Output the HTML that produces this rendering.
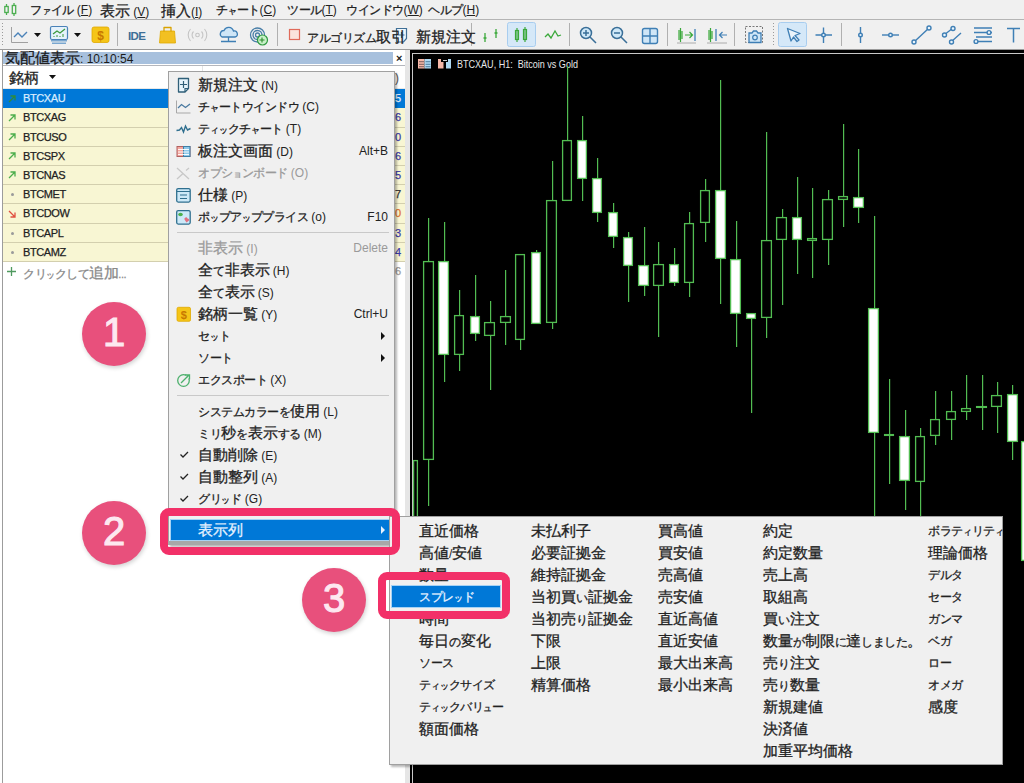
<!DOCTYPE html>
<html><head><meta charset="utf-8">
<style>
*{margin:0;padding:0;box-sizing:border-box}
html,body{width:1024px;height:783px;overflow:hidden}
body{position:relative;background:#f0f0f0;font-family:"Liberation Sans",sans-serif;font-size:12px;color:#222}
.a{position:absolute}
.t{position:absolute;white-space:nowrap;line-height:1}
#menubar{left:0;top:0;width:1024px;height:20px;background:#f0f0f0;border-bottom:1px solid #b4b4b4}
#toolbar{left:0;top:20px;width:1024px;height:30px;background:#f0f0f0;border-bottom:1px solid #9a9a9a}
#panel{left:0;top:50px;width:410px;height:733px;background:#fff}
#chart{left:410px;top:50px;width:614px;height:733px;background:#000}
.row{position:absolute;left:3px;width:402px;height:19px;background:#f7f5d6;border-bottom:1px solid #e3e0bd}
.row .n{position:absolute;left:20px;top:4px;font-size:12px;color:#222}
.row .v{position:absolute;left:393px;top:4px;font-size:12px;color:#3a3aa0}
.cm{position:absolute;background:#f0f0f0;border:1px solid #a0a0a0}
.mi{position:absolute;left:30px;font-size:12px;color:#222;white-space:nowrap}
.sc{position:absolute;right:6px;font-size:12px;color:#222;white-space:nowrap}
.dis{color:#9a9a9a}
.sep{position:absolute;left:8px;right:4px;height:1px;background:#c8c8c8}
.sm{position:absolute;font-size:12px;color:#222;white-space:nowrap}
.circle{position:absolute;width:64px;height:64px;border-radius:50%;background:#e8507c;color:#fff;font-size:40px;font-weight:normal;color:#fde8f0;-webkit-text-stroke:1.1px #fde8f0;text-align:center;line-height:60px;box-shadow:1px 2px 4px rgba(0,0,0,.18)}
.pbox{position:absolute;border:8px solid #f23068;border-radius:9px}
i.k{font-style:normal;font-size:14.7px;-webkit-text-stroke:0.3px currentColor}
i.h{font-style:normal;font-size:12px;letter-spacing:-0.5px;-webkit-text-stroke:0.3px currentColor}
i.s{font-style:normal;font-size:9.3px;-webkit-text-stroke:0.3px currentColor}
.lt{font-size:11px;letter-spacing:-0.4px;-webkit-text-stroke:0.25px currentColor}
.hl{position:absolute;background:#0078d7;border:1px solid #a9d4f5;color:#e8f4ff}
</style></head><body>

<div id="menubar" class="a">
  <svg class="a" style="left:4px;top:3px" width="14" height="13" viewBox="0 0 14 13"><g stroke="#4caf50" stroke-width="1.3" fill="#f0f0f0"><line x1="2.5" y1="1" x2="2.5" y2="12"/><rect x="0.8" y="3.5" width="3.4" height="6"/><line x1="10" y1="0" x2="10" y2="13"/><rect x="8.3" y="2.5" width="3.4" height="8"/></g></svg>
  <span class="t" style="left:30px;top:4px"><i class="h">フ</i><i class="s">ァ</i><i class="h">イル</i> (<u>F</u>)</span>
  <span class="t" style="left:100px;top:4px"><i class="k">表示</i> (<u>V</u>)</span>
  <span class="t" style="left:161px;top:4px"><i class="k">挿入</i>(<u>I</u>)</span>
  <span class="t" style="left:216px;top:4px"><i class="h">チ</i><i class="s">ャ</i><i class="h">ート</i>(<u>C</u>)</span>
  <span class="t" style="left:287px;top:4px"><i class="h">ツール</i>(<u>T</u>)</span>
  <span class="t" style="left:346px;top:4px"><i class="h">ウインドウ</i>(<u>W</u>)</span>
  <span class="t" style="left:428px;top:4px"><i class="h">ヘルプ</i>(<u>H</u>)</span>
</div>

<div id="toolbar" class="a">
 <svg class="a" style="left:0;top:0" width="1024" height="30" viewBox="0 20 1024 30">
  <g fill="#9a9a9a"><rect x="2" y="23" width="1" height="1"/><rect x="2" y="26" width="1" height="1"/><rect x="2" y="29" width="1" height="1"/><rect x="2" y="32" width="1" height="1"/><rect x="2" y="35" width="1" height="1"/><rect x="2" y="38" width="1" height="1"/><rect x="2" y="41" width="1" height="1"/><rect x="2" y="44" width="1" height="1"/>
  <rect x="773" y="23" width="1" height="1"/><rect x="773" y="26" width="1" height="1"/><rect x="773" y="29" width="1" height="1"/><rect x="773" y="32" width="1" height="1"/><rect x="773" y="35" width="1" height="1"/><rect x="773" y="38" width="1" height="1"/><rect x="773" y="41" width="1" height="1"/><rect x="773" y="44" width="1" height="1"/></g>
  <!-- line chart -->
  <path d="M11.5 27V42.5H28" stroke="#a0a0a0" stroke-width="1" fill="none"/>
  <path d="M14 37L18 33L22 37L27 32" stroke="#4a82b8" stroke-width="1.4" fill="none"/>
  <path d="M34 33H41L37.5 37Z" fill="#111"/>
  <!-- monitor chart -->
  <rect x="50.5" y="26.5" width="17" height="13" rx="1.5" fill="#e6f2fb" stroke="#4a82b8" stroke-width="1.2"/>
  <path d="M53 34L57 31L60 33L65 29" stroke="#3a9a3a" stroke-width="1.2" fill="none"/>
  <path d="M54 37V36M57 37V35M60 37V36M63 37V34" stroke="#3a9a3a" stroke-width="1"/>
  <rect x="51" y="40" width="16" height="1.5" fill="#7aa7d0"/><rect x="52" y="42.5" width="14" height="1.5" fill="#7aa7d0"/>
  <path d="M74 33H81L77.5 37Z" fill="#111"/>
  <!-- dollar -->
  <rect x="92" y="27" width="17" height="15.5" rx="2" fill="#f5c518" stroke="#e0a800" stroke-width="0.8"/>
  <text x="100.5" y="39.5" font-family="Liberation Sans" font-size="12" font-weight="bold" fill="#c87800" text-anchor="middle">$</text>
  <rect x="117" y="23" width="1" height="23" fill="#b0b0b0"/>
  <text x="128" y="39.5" font-family="Liberation Sans" font-size="11.5" font-weight="bold" fill="#3d6e96" letter-spacing="-0.6">IDE</text>
  <!-- bag -->
  <path d="M160.5 31H174.5L175.5 43H159.5Z" fill="#f2c022" stroke="#e0aa00" stroke-width="0.8"/><path d="M164 31.5V27.5H171V31.5" stroke="#d9a200" stroke-width="1.3" fill="none" stroke-linejoin="round"/>
  <!-- wifi gray -->
  <g stroke="#c4c4c4" stroke-width="1.1" fill="none"><circle cx="197.5" cy="35" r="1.8"/><path d="M193.5 31.5A5 5 0 0 0 193.5 38.5M201.5 31.5A5 5 0 0 1 201.5 38.5M190.5 29A9 9 0 0 0 190.5 41M204.5 29A9 9 0 0 1 204.5 41"/></g>
  <!-- cloud -->
  <path d="M222 37A3.5 3.5 0 0 1 224 30.5A5 5 0 0 1 233.5 31A3 3 0 0 1 235 37Z" fill="#cfe6f7" stroke="#3f7fb5" stroke-width="1.3"/>
  <path d="M228.5 37V41M221 41.5H236" stroke="#3f7fb5" stroke-width="1.3"/>
  <!-- signal -->
  <g stroke="#4a7fa8" stroke-width="1.3" fill="none"><circle cx="257.5" cy="35" r="2"/><circle cx="257.5" cy="35" r="4.5"/><circle cx="257.5" cy="35" r="7"/></g>
  <circle cx="262.5" cy="40" r="5" fill="#c8f0c8" stroke="#2f9a3f" stroke-width="1.2"/><path d="M262 37.5V42.5M259.5 40H264.5" stroke="#2a8a2a" stroke-width="1.1"/>
  <rect x="277" y="23" width="1" height="23" fill="#b0b0b0"/>
  <rect x="289.5" y="29.5" width="10" height="10" fill="#fbe3dc" stroke="#e06a5a" stroke-width="1.2"/>
  <!-- new order -->
  <path d="M396.5 28.5H406.5V38.5L403.5 42H396.5Z" fill="#eef6fc" stroke="#3f6f96" stroke-width="1.2"/><path d="M401.5 32V38M398.5 35H404.5" stroke="#3f6f96" stroke-width="1.2"/>
  <rect x="471" y="23" width="1" height="23" fill="#b0b0b0"/>
  <g stroke="#3aa83a" stroke-width="1.3" fill="none"><path d="M485 33V42M483.5 38H486.5M496 29V38M494.5 33H497.5"/></g>
  <!-- highlighted candles -->
  <rect x="507.5" y="22.5" width="28" height="24" rx="2" fill="#d5e8f8" stroke="#a8cdef"/>
  <g stroke="#3aa83a" stroke-width="1.2" fill="none"><rect x="515.5" y="30.5" width="3" height="9"/><path d="M517 28V42"/><rect x="523.5" y="29.5" width="3" height="10"/><path d="M525 27V42"/></g>
  <path d="M545 37L548 34L551 38L555 31L558 36L561 35" stroke="#3aa83a" stroke-width="1.3" fill="none"/>
  <rect x="569" y="23" width="1" height="23" fill="#b0b0b0"/>
  <g stroke="#3a6f98" stroke-width="1.5" fill="#cfe8f8"><circle cx="586" cy="33" r="5.5"/><path d="M590 37L596 43M583 33H589M586 30V36"/>
  <circle cx="617" cy="33" r="5.5"/><path d="M621 37L627 43M614 33H620"/></g>
  <rect x="642.5" y="28.5" width="15" height="15" rx="2" fill="#cfe6f7" stroke="#3f7fb5" stroke-width="1.4"/><path d="M650 29V43M643 36H657" stroke="#3f7fb5" stroke-width="1.4"/>
  <rect x="667" y="23" width="1" height="23" fill="#b0b0b0"/>
  <g stroke="#3aa83a" stroke-width="1.2" fill="none"><path d="M679 30V40M682 31V39M680.5 28V42"/></g><path d="M685 35H692M689.5 32L692.5 35L689.5 38" stroke="#3aa83a" stroke-width="1.2" fill="none"/><path d="M695 29V41" stroke="#3f7fb5" stroke-width="1.3"/><path d="M677 43H696" stroke="#9a9a9a" stroke-width="0.8"/>
  <g stroke="#3aa83a" stroke-width="1.2" fill="none"><path d="M709 30V40M712 31V39M710.5 28V42"/></g><path d="M716 29V41" stroke="#3f7fb5" stroke-width="1.3"/><path d="M720 35H727M722.5 32L719.5 35L722.5 38" stroke="#3f7fb5" stroke-width="1.2" fill="none"/><path d="M707 43H727" stroke="#9a9a9a" stroke-width="0.8"/>
  <rect x="734" y="23" width="1" height="23" fill="#b0b0b0"/>
  <rect x="745.5" y="26.5" width="17" height="16" fill="none" stroke="#777" stroke-width="1" stroke-dasharray="2 1.5"/>
  <path d="M749 33H752L753.5 31H756.5L758 33H761V42.5H749Z" fill="#cfe6f7" stroke="#3f7fb5" stroke-width="1.3"/><circle cx="755" cy="37.5" r="2.3" fill="none" stroke="#3f7fb5" stroke-width="1.2"/>
  <!-- cursor highlighted -->
  <rect x="778.5" y="22.5" width="28" height="24" rx="2" fill="#d5e8f8" stroke="#a8cdef"/>
  <path d="M787.5 28.5L800 33.5L795 35.5L799 40L797 41.5L793.5 37L791 41Z" fill="#eaf4fb" stroke="#3f7fb5" stroke-width="1.3" stroke-linejoin="round"/>
  <g stroke="#3f7fb5" stroke-width="1.4" fill="none"><path d="M815.5 35H832M823.5 27.5V43"/><circle cx="823.5" cy="35" r="1.8" fill="#eaf4fb"/></g>
  <rect x="841" y="23" width="1" height="23" fill="#b0b0b0"/>
  <g stroke="#3f7fb5" stroke-width="1.4" fill="#eaf4fb"><path d="M860.5 27V43"/><circle cx="860.5" cy="35" r="1.8"/>
  <path d="M882 35H899"/><circle cx="890.5" cy="35" r="1.8"/>
  <path d="M914 42L929 28"/><circle cx="914" cy="42" r="2"/><circle cx="929" cy="28" r="2"/>
  <path d="M944 35L953 28M951 42L961 33"/><circle cx="944.5" cy="35" r="2"/><circle cx="953" cy="28.5" r="2"/><circle cx="951.5" cy="42" r="2"/>
  <path d="M974 28H992M974 32.5H992M976 37H992M976 41.5H992" fill="none"/><circle cx="989" cy="32.5" r="1.9"/><circle cx="976" cy="41.5" r="1.9"/>
  <path d="M1007 28.5H1020M1013.5 28.5V42.5" fill="none" stroke-width="1.5"/></g>
 </svg>
 <span class="t" style="left:307px;top:10px"><i class="h">アルゴリズム</i><i class="k">取引</i></span>
 <span class="t" style="left:416px;top:10px"><i class="k">新規注文</i></span>
</div>

<div id="panel" class="a">
  <div class="a" style="left:2px;top:0;width:1px;height:733px;background:#9c9c9c"></div><div class="a" style="left:405px;top:0;width:5px;height:733px;background:#e6e6e6"></div>
  <div class="a" style="left:3px;top:2px;width:390px;height:12px;background:#a7c0dd"></div><div class="a" style="left:3px;top:15px;width:402px;height:1px;background:#b4b6bc"></div>
  <span class="t" style="left:5px;top:1px;font-size:12px;color:#1a1a1a"><i class="k">気配値表示</i>: 10:10:54</span>
  <span class="t" style="left:396px;top:3px;font-size:11px;font-weight:bold;color:#222">×</span>
  <div class="a" style="left:3px;top:16px;width:402px;height:23px;background:#fff;border-bottom:1px solid #e8e8e8"></div>
  <span class="t" style="left:9px;top:21px"><i class="k">銘柄</i></span>
  <svg class="a" style="left:49px;top:25px" width="7" height="4"><path d="M0 0H7L3.5 4Z" fill="#111"/></svg>
  <div class="a" style="left:202px;top:16px;width:1px;height:23px;background:#e4e4e4"></div>
  <span class="t" style="left:395px;top:22px;color:#555">)</span>
  <div class="a" style="left:3px;top:39px;width:402px;height:19px;background:#0078d7"></div>
  <svg class="a" style="left:8px;top:44.5px" width="8" height="8"><path d="M1 7L7 1M2.5 1H7V5.5" stroke="#2f8a3a" stroke-width="1.3" fill="none"/></svg>
  <span class="t lt" style="left:23px;top:43.0px;color:#d8ecff">BTCXAU</span>
  <span class="t lt" style="left:395px;top:43.0px;color:#e8f4ff">5</span>
  <div class="a" style="left:3px;top:58px;width:402px;height:20px;background:#f8f6d3;border-bottom:1px solid #d3cfae"></div>
  <svg class="a" style="left:8px;top:63.5px" width="8" height="8"><path d="M1 7L7 1M2.5 1H7V5.5" stroke="#4cae4c" stroke-width="1.3" fill="none"/></svg>
  <span class="t lt" style="left:23px;top:62.0px;color:#222">BTCXAG</span>
  <span class="t lt" style="left:395px;top:62.0px;color:#3a3aa8">6</span>
  <div class="a" style="left:3px;top:78px;width:402px;height:19px;background:#f8f6d3;border-bottom:1px solid #d3cfae"></div>
  <svg class="a" style="left:8px;top:83.0px" width="8" height="8"><path d="M1 7L7 1M2.5 1H7V5.5" stroke="#4cae4c" stroke-width="1.3" fill="none"/></svg>
  <span class="t lt" style="left:23px;top:81.5px;color:#222">BTCUSO</span>
  <span class="t lt" style="left:395px;top:81.5px;color:#3a3aa8">0</span>
  <div class="a" style="left:3px;top:97px;width:402px;height:19px;background:#f8f6d3;border-bottom:1px solid #d3cfae"></div>
  <svg class="a" style="left:8px;top:102.0px" width="8" height="8"><path d="M1 7L7 1M2.5 1H7V5.5" stroke="#4cae4c" stroke-width="1.3" fill="none"/></svg>
  <span class="t lt" style="left:23px;top:100.5px;color:#222">BTCSPX</span>
  <span class="t lt" style="left:395px;top:100.5px;color:#3a3aa8">6</span>
  <div class="a" style="left:3px;top:116px;width:402px;height:19px;background:#f8f6d3;border-bottom:1px solid #d3cfae"></div>
  <svg class="a" style="left:8px;top:121.0px" width="8" height="8"><path d="M1 7L7 1M2.5 1H7V5.5" stroke="#4cae4c" stroke-width="1.3" fill="none"/></svg>
  <span class="t lt" style="left:23px;top:119.5px;color:#222">BTCNAS</span>
  <span class="t lt" style="left:395px;top:119.5px;color:#3a3aa8">5</span>
  <div class="a" style="left:3px;top:135px;width:402px;height:19px;background:#f8f6d3;border-bottom:1px solid #d3cfae"></div>
  <div class="a" style="left:11px;top:143.0px;width:3px;height:3px;border-radius:50%;background:#9a9a9a"></div>
  <span class="t lt" style="left:23px;top:138.5px;color:#222">BTCMET</span>
  <span class="t lt" style="left:395px;top:138.5px;color:#333">7</span>
  <div class="a" style="left:3px;top:154px;width:402px;height:20px;background:#f8f6d3;border-bottom:1px solid #d3cfae"></div>
  <svg class="a" style="left:8px;top:159.5px" width="8" height="8"><path d="M1 1L7 7M2.5 7H7V2.5" stroke="#e05040" stroke-width="1.3" fill="none"/></svg>
  <span class="t lt" style="left:23px;top:158.0px;color:#222">BTCDOW</span>
  <span class="t lt" style="left:395px;top:158.0px;color:#e07030">0</span>
  <div class="a" style="left:3px;top:174px;width:402px;height:19px;background:#f8f6d3;border-bottom:1px solid #d3cfae"></div>
  <div class="a" style="left:11px;top:182.0px;width:3px;height:3px;border-radius:50%;background:#9a9a9a"></div>
  <span class="t lt" style="left:23px;top:177.5px;color:#222">BTCAPL</span>
  <span class="t lt" style="left:395px;top:177.5px;color:#3a3aa8">3</span>
  <div class="a" style="left:3px;top:193px;width:402px;height:19px;background:#f8f6d3;border-bottom:1px solid #d3cfae"></div>
  <div class="a" style="left:11px;top:201.0px;width:3px;height:3px;border-radius:50%;background:#9a9a9a"></div>
  <span class="t lt" style="left:23px;top:196.5px;color:#222">BTCAMZ</span>
  <span class="t lt" style="left:395px;top:196.5px;color:#3a3aa8">4</span>
  <svg class="a" style="left:7px;top:216.5px" width="9" height="9"><path d="M4.5 0V9M0 4.5H9" stroke="#4f9a5f" stroke-width="1.3"/></svg>
  <span class="t lt" style="left:23px;top:215.5px;color:#8a8a8a"><i class="h">クリ</i><i class="s">ッ</i><i class="h">クして</i><i class="k">追加</i>...</span>
  <span class="t lt" style="left:395px;top:215.5px;color:#9a9a9a">6</span>
</div>

<div id="chart" class="a">
  <div class="a" style="left:2px;top:3px;width:1px;height:730px;background:#c8c8c8"></div>
  <div class="a" style="left:2px;top:3px;width:612px;height:1px;background:#c8c8c8"></div>
  <svg class="a" style="left:8px;top:9px" width="14" height="10"><rect x="0" y="0" width="6.5" height="9.5" fill="#f6b8a8"/><rect x="6.5" y="0" width="6.5" height="9.5" fill="#b0daf4"/><g fill="#6a5050"><rect x="1" y="2.3" width="5" height="0.9"/><rect x="1" y="4.8" width="5" height="0.9"/><rect x="1" y="7.3" width="5" height="0.9"/></g><g fill="#3f6f90"><rect x="7.5" y="2.3" width="5" height="0.9"/><rect x="7.5" y="4.8" width="5" height="0.9"/><rect x="7.5" y="7.3" width="5" height="0.9"/></g></svg>
  <svg class="a" style="left:28px;top:9px" width="14" height="10"><path d="M0 0H3V3H5.5V9.5H0Z" fill="#f6b8a8"/><path d="M8 3H10V0H13V9.5H8Z" fill="#b0daf4"/><rect x="5" y="1" width="4" height="1" fill="#d0d0d0"/></svg>
  <span class="t" style="left:47px;top:9px;font-size:10.5px;transform:scaleX(0.86);transform-origin:0 0;color:#e8e8e8">BTCXAU, H1:&nbsp; Bitcoin vs Gold</span>
</div>
<svg class="a" style="left:0;top:0" width="1024" height="783">
<rect x="413.6" y="460.6" width="3.8" height="68.8" fill="#000" stroke="#52bd52" stroke-width="1.3"/>
<rect x="428" y="218" width="1.2" height="43" fill="#52bd52"/>
<rect x="428" y="460" width="1.2" height="46" fill="#52bd52"/>
<rect x="423.6" y="261.6" width="9.8" height="197.8" fill="#000" stroke="#52bd52" stroke-width="1.3"/>
<rect x="444" y="222" width="1.2" height="39" fill="#52bd52"/>
<rect x="444" y="355" width="1.2" height="27" fill="#52bd52"/>
<rect x="438.6" y="261.6" width="9.8" height="92.8" fill="#fff" stroke="#52bd52" stroke-width="1.3"/>
<rect x="459" y="290" width="1.2" height="25" fill="#52bd52"/>
<rect x="459" y="355" width="1.2" height="16" fill="#52bd52"/>
<rect x="454.6" y="315.6" width="8.8" height="38.8" fill="#000" stroke="#52bd52" stroke-width="1.3"/>
<rect x="475" y="275" width="1.2" height="41" fill="#52bd52"/>
<rect x="475" y="334" width="1.2" height="7" fill="#52bd52"/>
<rect x="470.6" y="316.6" width="8.8" height="16.8" fill="#fff" stroke="#52bd52" stroke-width="1.3"/>
<rect x="490" y="301" width="1.2" height="21" fill="#52bd52"/>
<rect x="490" y="336" width="1.2" height="54" fill="#52bd52"/>
<rect x="484.6" y="322.6" width="9.8" height="12.8" fill="#000" stroke="#52bd52" stroke-width="1.3"/>
<rect x="505" y="270" width="1.2" height="46" fill="#52bd52"/>
<rect x="505" y="323" width="1.2" height="22" fill="#52bd52"/>
<rect x="500.6" y="316.6" width="9.8" height="5.8" fill="#000" stroke="#52bd52" stroke-width="1.3"/>
<rect x="520" y="340" width="1.2" height="10" fill="#52bd52"/>
<rect x="515.6" y="254.6" width="8.8" height="84.8" fill="#000" stroke="#52bd52" stroke-width="1.3"/>
<rect x="536" y="250" width="1.2" height="2" fill="#52bd52"/>
<rect x="531.6" y="252.6" width="8.8" height="70.8" fill="#fff" stroke="#52bd52" stroke-width="1.3"/>
<rect x="552" y="161" width="1.2" height="39" fill="#52bd52"/>
<rect x="552" y="323" width="1.2" height="6" fill="#52bd52"/>
<rect x="546.6" y="200.6" width="9.8" height="121.8" fill="#000" stroke="#52bd52" stroke-width="1.3"/>
<rect x="567" y="66" width="1.2" height="74" fill="#52bd52"/>
<rect x="562.6" y="140.6" width="8.8" height="59.8" fill="#000" stroke="#52bd52" stroke-width="1.3"/>
<rect x="582" y="116" width="1.2" height="24" fill="#52bd52"/>
<rect x="582" y="179" width="1.2" height="22" fill="#52bd52"/>
<rect x="577.6" y="140.6" width="8.8" height="37.8" fill="#fff" stroke="#52bd52" stroke-width="1.3"/>
<rect x="597" y="158" width="1.2" height="20" fill="#52bd52"/>
<rect x="597" y="213" width="1.2" height="9" fill="#52bd52"/>
<rect x="592.6" y="178.6" width="8.8" height="33.8" fill="#fff" stroke="#52bd52" stroke-width="1.3"/>
<rect x="613" y="203" width="1.2" height="9" fill="#52bd52"/>
<rect x="613" y="237" width="1.2" height="11" fill="#52bd52"/>
<rect x="608.6" y="212.6" width="8.8" height="23.8" fill="#fff" stroke="#52bd52" stroke-width="1.3"/>
<rect x="628" y="232" width="1.2" height="5" fill="#52bd52"/>
<rect x="628" y="266" width="1.2" height="36" fill="#52bd52"/>
<rect x="623.6" y="237.6" width="8.8" height="27.8" fill="#fff" stroke="#52bd52" stroke-width="1.3"/>
<rect x="644" y="227" width="1.2" height="38" fill="#52bd52"/>
<rect x="644" y="286" width="1.2" height="10" fill="#52bd52"/>
<rect x="638.6" y="265.6" width="9.8" height="19.8" fill="#fff" stroke="#52bd52" stroke-width="1.3"/>
<rect x="658" y="242" width="1.2" height="22" fill="#52bd52"/>
<rect x="658" y="286" width="1.2" height="51" fill="#52bd52"/>
<rect x="653.6" y="264.6" width="9.8" height="20.8" fill="#000" stroke="#52bd52" stroke-width="1.3"/>
<rect x="674" y="248" width="1.2" height="16" fill="#52bd52"/>
<rect x="674" y="283" width="1.2" height="3" fill="#52bd52"/>
<rect x="669.6" y="264.6" width="8.8" height="17.8" fill="#fff" stroke="#52bd52" stroke-width="1.3"/>
<rect x="689" y="212" width="1.2" height="11" fill="#52bd52"/>
<rect x="689" y="283" width="1.2" height="14" fill="#52bd52"/>
<rect x="684.6" y="223.6" width="8.8" height="58.8" fill="#000" stroke="#52bd52" stroke-width="1.3"/>
<rect x="705" y="179" width="1.2" height="11" fill="#52bd52"/>
<rect x="705" y="223" width="1.2" height="19" fill="#52bd52"/>
<rect x="700.6" y="190.6" width="8.8" height="31.8" fill="#000" stroke="#52bd52" stroke-width="1.3"/>
<rect x="720" y="80" width="1.2" height="110" fill="#52bd52"/>
<rect x="720" y="259" width="1.2" height="45" fill="#52bd52"/>
<rect x="715.6" y="190.6" width="9.8" height="67.8" fill="#fff" stroke="#52bd52" stroke-width="1.3"/>
<rect x="736" y="221" width="1.2" height="38" fill="#52bd52"/>
<rect x="736" y="314" width="1.2" height="33" fill="#52bd52"/>
<rect x="730.6" y="259.6" width="9.8" height="53.8" fill="#fff" stroke="#52bd52" stroke-width="1.3"/>
<rect x="751" y="319" width="1.2" height="94" fill="#52bd52"/>
<rect x="746.6" y="313.6" width="8.8" height="4.8" fill="#fff" stroke="#52bd52" stroke-width="1.3"/>
<rect x="766" y="132" width="1.2" height="108" fill="#52bd52"/>
<rect x="766" y="318" width="1.2" height="20" fill="#52bd52"/>
<rect x="761.6" y="240.6" width="9.8" height="76.8" fill="#000" stroke="#52bd52" stroke-width="1.3"/>
<rect x="782" y="209" width="1.2" height="8" fill="#52bd52"/>
<rect x="782" y="240" width="1.2" height="65" fill="#52bd52"/>
<rect x="776.6" y="217.6" width="9.8" height="21.8" fill="#000" stroke="#52bd52" stroke-width="1.3"/>
<rect x="797" y="177" width="1.2" height="40" fill="#52bd52"/>
<rect x="797" y="240" width="1.2" height="34" fill="#52bd52"/>
<rect x="792.6" y="217.6" width="8.8" height="21.8" fill="#fff" stroke="#52bd52" stroke-width="1.3"/>
<rect x="812" y="188" width="1.2" height="50" fill="#52bd52"/>
<rect x="812" y="241" width="1.2" height="37" fill="#52bd52"/>
<rect x="807.6" y="238.6" width="8.8" height="1.8" fill="#000" stroke="#52bd52" stroke-width="1.3"/>
<rect x="828" y="190" width="1.2" height="9" fill="#52bd52"/>
<rect x="828" y="240" width="1.2" height="25" fill="#52bd52"/>
<rect x="822.6" y="199.6" width="9.8" height="39.8" fill="#000" stroke="#52bd52" stroke-width="1.3"/>
<rect x="843" y="124" width="1.2" height="72" fill="#52bd52"/>
<rect x="843" y="200" width="1.2" height="27" fill="#52bd52"/>
<rect x="838.6" y="196.6" width="8.8" height="2.8" fill="#000" stroke="#52bd52" stroke-width="1.3"/>
<rect x="858" y="149" width="1.2" height="48" fill="#52bd52"/>
<rect x="858" y="208" width="1.2" height="15" fill="#52bd52"/>
<rect x="853.6" y="197.6" width="9.8" height="9.8" fill="#fff" stroke="#52bd52" stroke-width="1.3"/>
<rect x="874" y="216" width="1.2" height="92" fill="#52bd52"/>
<rect x="874" y="433" width="1.2" height="97" fill="#52bd52"/>
<rect x="868.6" y="308.6" width="9.8" height="123.8" fill="#fff" stroke="#52bd52" stroke-width="1.3"/>
<rect x="889" y="379" width="1.2" height="55" fill="#52bd52"/>
<rect x="889" y="436" width="1.2" height="48" fill="#52bd52"/>
<rect x="884.6" y="434.6" width="8.8" height="0.8" fill="#000" stroke="#52bd52" stroke-width="1.3"/>
<rect x="905" y="410" width="1.2" height="26" fill="#52bd52"/>
<rect x="905" y="481" width="1.2" height="29" fill="#52bd52"/>
<rect x="899.6" y="436.6" width="9.8" height="43.8" fill="#fff" stroke="#52bd52" stroke-width="1.3"/>
<rect x="920" y="428" width="1.2" height="8" fill="#52bd52"/>
<rect x="920" y="482" width="1.2" height="48" fill="#52bd52"/>
<rect x="915.6" y="436.6" width="8.8" height="44.8" fill="#000" stroke="#52bd52" stroke-width="1.3"/>
<rect x="935" y="391" width="1.2" height="28" fill="#52bd52"/>
<rect x="935" y="436" width="1.2" height="9" fill="#52bd52"/>
<rect x="930.6" y="419.6" width="8.8" height="15.8" fill="#000" stroke="#52bd52" stroke-width="1.3"/>
<rect x="951" y="391" width="1.2" height="20" fill="#52bd52"/>
<rect x="951" y="420" width="1.2" height="20" fill="#52bd52"/>
<rect x="946.6" y="411.6" width="8.8" height="7.8" fill="#000" stroke="#52bd52" stroke-width="1.3"/>
<rect x="966" y="375" width="1.2" height="33" fill="#52bd52"/>
<rect x="966" y="412" width="1.2" height="8" fill="#52bd52"/>
<rect x="961.6" y="408.6" width="8.8" height="2.8" fill="#000" stroke="#52bd52" stroke-width="1.3"/>
<rect x="982" y="375" width="1.2" height="31" fill="#52bd52"/>
<rect x="982" y="408" width="1.2" height="22" fill="#52bd52"/>
<rect x="976.6" y="406.6" width="9.8" height="0.8" fill="#000" stroke="#52bd52" stroke-width="1.3"/>
<rect x="997" y="382" width="1.2" height="13" fill="#52bd52"/>
<rect x="997" y="407" width="1.2" height="26" fill="#52bd52"/>
<rect x="991.6" y="395.6" width="9.8" height="10.8" fill="#000" stroke="#52bd52" stroke-width="1.3"/>
<rect x="1012" y="385" width="1.2" height="9" fill="#52bd52"/>
<rect x="1012" y="442" width="1.2" height="18" fill="#52bd52"/>
<rect x="1007.6" y="394.6" width="9.8" height="46.8" fill="#fff" stroke="#52bd52" stroke-width="1.3"/>
<rect x="1027" y="430" width="1.2" height="11" fill="#52bd52"/>
<rect x="1027" y="561" width="1.2" height="39" fill="#52bd52"/>
<rect x="1021.6" y="441.6" width="9.8" height="118.8" fill="#fff" stroke="#52bd52" stroke-width="1.3"/>
</svg>

<div class="a" style="left:168px;top:71px;width:227px;height:474px;background:#f0f0f0;box-shadow:inset 0 0 0 1px #a0a0a0, 2px 2px 2px rgba(0,0,0,.28)"></div>
<div class="t" style="left:198px;top:74px;height:22px;line-height:22px;color:#222"><i class="k">新規注文</i> (N)</div>
<div class="t" style="left:198px;top:96px;height:22px;line-height:22px;color:#222"><i class="h">チ</i><i class="s">ャ</i><i class="h">ートウインドウ</i> (C)</div>
<div class="t" style="left:198px;top:118px;height:22px;line-height:22px;color:#222"><i class="h">テ</i><i class="s">ィッ</i><i class="h">クチ</i><i class="s">ャ</i><i class="h">ート</i> (T)</div>
<div class="t" style="left:198px;top:140px;height:22px;line-height:22px;color:#222"><i class="k">板注文画面</i> (D)</div>
<div class="t" style="right:636px;top:140px;height:22px;line-height:22px;color:#222">Alt+B</div>
<div class="t" style="left:198px;top:162px;height:22px;line-height:22px;color:#9a9a9a"><i class="h">オプシ</i><i class="s">ョ</i><i class="h">ンボード</i> (O)</div>
<div class="t" style="left:198px;top:184px;height:22px;line-height:22px;color:#222"><i class="k">仕様</i> (P)</div>
<div class="t" style="left:198px;top:206px;height:22px;line-height:22px;color:#222"><i class="h">ポ</i><i class="s">ッ</i><i class="h">プア</i><i class="s">ッ</i><i class="h">ププライス</i> (o)</div>
<div class="t" style="right:636px;top:206px;height:22px;line-height:22px;color:#222">F10</div>
<div class="a" style="left:177px;top:232px;width:212px;height:1px;background:#c9c9c9"></div>
<div class="t" style="left:198px;top:237px;height:22px;line-height:22px;color:#9a9a9a"><i class="k">非表示</i> (I)</div>
<div class="t" style="right:636px;top:237px;height:22px;line-height:22px;color:#9a9a9a">Delete</div>
<div class="t" style="left:198px;top:259px;height:22px;line-height:22px;color:#222"><i class="k">全</i><i class="h">て</i><i class="k">非表示</i> (H)</div>
<div class="t" style="left:198px;top:281px;height:22px;line-height:22px;color:#222"><i class="k">全</i><i class="h">て</i><i class="k">表示</i> (S)</div>
<div class="t" style="left:198px;top:303px;height:22px;line-height:22px;color:#222"><i class="k">銘柄一覧</i> (Y)</div>
<div class="t" style="right:636px;top:303px;height:22px;line-height:22px;color:#222">Ctrl+U</div>
<div class="t" style="left:198px;top:325px;height:22px;line-height:22px;color:#222"><i class="h">セ</i><i class="s">ッ</i><i class="h">ト</i></div>
<div class="t" style="left:198px;top:347px;height:22px;line-height:22px;color:#222"><i class="h">ソート</i></div>
<div class="t" style="left:198px;top:369px;height:22px;line-height:22px;color:#222"><i class="h">エクスポート</i> (X)</div>
<div class="a" style="left:177px;top:395px;width:212px;height:1px;background:#c9c9c9"></div>
<div class="t" style="left:198px;top:400px;height:22px;line-height:22px;color:#222"><i class="h">システムカラーを</i><i class="k">使用</i> (L)</div>
<div class="t" style="left:198px;top:422px;height:22px;line-height:22px;color:#222"><i class="h">ミリ</i><i class="k">秒</i><i class="h">を</i><i class="k">表示</i><i class="h">する</i> (M)</div>
<div class="t" style="left:198px;top:444px;height:22px;line-height:22px;color:#222"><i class="k">自動削除</i> (E)</div>
<div class="t" style="left:198px;top:466px;height:22px;line-height:22px;color:#222"><i class="k">自動整列</i> (A)</div>
<div class="t" style="left:198px;top:488px;height:22px;line-height:22px;color:#222"><i class="h">グリ</i><i class="s">ッ</i><i class="h">ド</i> (G)</div>
<div class="a" style="left:177px;top:514px;width:212px;height:1px;background:#c9c9c9"></div>
<svg class="a" style="left:0;top:0" width="1024" height="783"><path d="M178.5 78.5H188.5V88.5L185 92H178.5Z" fill="#e6f5fc" stroke="#2f5f78" stroke-width="1.3" stroke-linejoin="round"/><path d="M183.5 81V88M180 84.5H187M185 92V88.5H188.5" stroke="#2f5f78" stroke-width="1.2" fill="none"/><path d="M176.5 100.5V113H190.5" stroke="#a8a8a8" stroke-width="1" fill="none"/><path d="M178 108L181.5 104.5L185.5 107.5L190 104" stroke="#4a7aa0" stroke-width="1.3" fill="none"/><path d="M176.5 130.5L179.5 130L181.5 127.5L183.5 132L185.5 126L187.5 130L190.5 128.5" stroke="#2f6f8f" stroke-width="1.4" fill="none"/><rect x="177" y="146.5" width="13" height="10" fill="#f4a8a0" stroke="#b06060" stroke-width="1"/><rect x="183.5" y="146.5" width="6.5" height="10" fill="#8cc8ea" stroke="#3f7fa5" stroke-width="1"/><path d="M178 149.5H189M178 152H189M178 154.5H189" stroke="#fff" stroke-width="0.9"/><path d="M177 168L189 179M177 179L183 173.5M186 170.5L189 168" stroke="#c8c8c8" stroke-width="1.3" fill="none"/><rect x="176.7" y="188.6" width="13.5" height="13.5" rx="1.5" fill="#cde9f8" stroke="#2f6f8f" stroke-width="1.3"/><path d="M177 191.5H190M180 195H187M180 198.5H187" stroke="#2f6f8f" stroke-width="1.1"/><rect x="176.7" y="210.6" width="13.5" height="13.5" rx="1.5" fill="#cde9f8" stroke="#2f6f8f" stroke-width="1.3"/><ellipse cx="180.5" cy="214.5" rx="2.3" ry="1.8" fill="#4cb04c"/><path d="M184.5 219.5A1.5 1.5 0 0 1 187.5 218.5A1.5 1.5 0 0 1 189 220.5L186.5 222.5Z" fill="#e07080"/><rect x="177" y="307.3" width="13.5" height="14" rx="1.5" fill="#f5c518" stroke="#e0a800" stroke-width="0.8"/><text x="183.8" y="318.5" font-family="Liberation Sans" font-size="11" font-weight="bold" fill="#c87800" text-anchor="middle">$</text><path d="M381 332V340L385 336Z" fill="#111"/><path d="M381 354V362L385 358Z" fill="#111"/><circle cx="183.5" cy="380.5" r="5.8" fill="none" stroke="#4cb06c" stroke-width="1.3"/><path d="M181 383L189 375M185 375H189.5V379.5" stroke="#4cb06c" stroke-width="1.3" fill="#f0f0f0"/><path d="M180.5 454.5L183 457L188 452" stroke="#222" stroke-width="1.3" fill="none"/><path d="M180.5 476.5L183 479L188 474" stroke="#222" stroke-width="1.3" fill="none"/><path d="M180.5 498.5L183 501L188 496" stroke="#222" stroke-width="1.3" fill="none"/></svg>
<div class="a" style="left:168px;top:541px;width:227px;height:4px;background:#a8a8a8"></div>
<div class="a" style="left:170px;top:519px;width:221px;height:22px;background:#0078d7;box-shadow:inset 0 0 0 1px #a6d2f4"></div>
<div class="t" style="left:198px;top:519px;height:22px;line-height:22px;color:#e6f2ff"><i class="k">表示列</i></div>
<svg class="a" style="left:0;top:0" width="1024" height="783"><path d="M381 526V534L385 530Z" fill="#e6f2ff"/></svg>
<div class="a" style="left:389px;top:516px;width:614px;height:249px;background:#f0f0f0;box-shadow:inset 0 0 0 1px #a0a0a0, 2px 2px 2px rgba(0,0,0,.28)"></div>
<div class="t" style="left:419px;top:520px;height:22px;line-height:22px"><i class="k">直近価格</i></div>
<div class="t" style="left:419px;top:542px;height:22px;line-height:22px"><i class="k">高値</i>/<i class="k">安値</i></div>
<div class="t" style="left:419px;top:564px;height:22px;line-height:22px"><i class="k">数量</i></div>
<div class="t" style="left:419px;top:608px;height:22px;line-height:22px"><i class="k">時間</i></div>
<div class="t" style="left:419px;top:630px;height:22px;line-height:22px"><i class="k">毎日</i><i class="h">の</i><i class="k">変化</i></div>
<div class="t" style="left:419px;top:652px;height:22px;line-height:22px"><i class="h">ソース</i></div>
<div class="t" style="left:419px;top:674px;height:22px;line-height:22px"><i class="h">テ</i><i class="s">ィッ</i><i class="h">クサイズ</i></div>
<div class="t" style="left:419px;top:696px;height:22px;line-height:22px"><i class="h">テ</i><i class="s">ィッ</i><i class="h">クバリ</i><i class="s">ュ</i><i class="h">ー</i></div>
<div class="t" style="left:419px;top:718px;height:22px;line-height:22px"><i class="k">額面価格</i></div>
<div class="t" style="left:531px;top:520px;height:22px;line-height:22px"><i class="k">未払利子</i></div>
<div class="t" style="left:531px;top:542px;height:22px;line-height:22px"><i class="k">必要証拠金</i></div>
<div class="t" style="left:531px;top:564px;height:22px;line-height:22px"><i class="k">維持証拠金</i></div>
<div class="t" style="left:531px;top:586px;height:22px;line-height:22px"><i class="k">当初買</i><i class="h">い</i><i class="k">証拠金</i></div>
<div class="t" style="left:531px;top:608px;height:22px;line-height:22px"><i class="k">当初売</i><i class="h">り</i><i class="k">証拠金</i></div>
<div class="t" style="left:531px;top:630px;height:22px;line-height:22px"><i class="k">下限</i></div>
<div class="t" style="left:531px;top:652px;height:22px;line-height:22px"><i class="k">上限</i></div>
<div class="t" style="left:531px;top:674px;height:22px;line-height:22px"><i class="k">精算価格</i></div>
<div class="t" style="left:658px;top:520px;height:22px;line-height:22px"><i class="k">買高値</i></div>
<div class="t" style="left:658px;top:542px;height:22px;line-height:22px"><i class="k">買安値</i></div>
<div class="t" style="left:658px;top:564px;height:22px;line-height:22px"><i class="k">売高値</i></div>
<div class="t" style="left:658px;top:586px;height:22px;line-height:22px"><i class="k">売安値</i></div>
<div class="t" style="left:658px;top:608px;height:22px;line-height:22px"><i class="k">直近高値</i></div>
<div class="t" style="left:658px;top:630px;height:22px;line-height:22px"><i class="k">直近安値</i></div>
<div class="t" style="left:658px;top:652px;height:22px;line-height:22px"><i class="k">最大出来高</i></div>
<div class="t" style="left:658px;top:674px;height:22px;line-height:22px"><i class="k">最小出来高</i></div>
<div class="t" style="left:763px;top:520px;height:22px;line-height:22px"><i class="k">約定</i></div>
<div class="t" style="left:763px;top:542px;height:22px;line-height:22px"><i class="k">約定数量</i></div>
<div class="t" style="left:763px;top:564px;height:22px;line-height:22px"><i class="k">売上高</i></div>
<div class="t" style="left:763px;top:586px;height:22px;line-height:22px"><i class="k">取組高</i></div>
<div class="t" style="left:763px;top:608px;height:22px;line-height:22px"><i class="k">買</i><i class="h">い</i><i class="k">注文</i></div>
<div class="t" style="left:763px;top:630px;height:22px;line-height:22px"><i class="k">数量</i><i class="h">が</i><i class="k">制限</i><i class="h">に</i><i class="k">達</i><i class="h">しました</i><i class="k">。</i></div>
<div class="t" style="left:763px;top:652px;height:22px;line-height:22px"><i class="k">売</i><i class="h">り</i><i class="k">注文</i></div>
<div class="t" style="left:763px;top:674px;height:22px;line-height:22px"><i class="k">売</i><i class="h">り</i><i class="k">数量</i></div>
<div class="t" style="left:763px;top:696px;height:22px;line-height:22px"><i class="k">新規建値</i></div>
<div class="t" style="left:763px;top:718px;height:22px;line-height:22px"><i class="k">決済値</i></div>
<div class="t" style="left:763px;top:740px;height:22px;line-height:22px"><i class="k">加重平均価格</i></div>
<div class="t" style="left:928px;top:520px;height:22px;line-height:22px"><i class="h">ボラテ</i><i class="s">ィ</i><i class="h">リテ</i><i class="s">ィ</i></div>
<div class="t" style="left:928px;top:542px;height:22px;line-height:22px"><i class="k">理論価格</i></div>
<div class="t" style="left:928px;top:564px;height:22px;line-height:22px"><i class="h">デルタ</i></div>
<div class="t" style="left:928px;top:586px;height:22px;line-height:22px"><i class="h">セータ</i></div>
<div class="t" style="left:928px;top:608px;height:22px;line-height:22px"><i class="h">ガンマ</i></div>
<div class="t" style="left:928px;top:630px;height:22px;line-height:22px"><i class="h">ベガ</i></div>
<div class="t" style="left:928px;top:652px;height:22px;line-height:22px"><i class="h">ロー</i></div>
<div class="t" style="left:928px;top:674px;height:22px;line-height:22px"><i class="h">オメガ</i></div>
<div class="t" style="left:928px;top:696px;height:22px;line-height:22px"><i class="k">感度</i></div>
<div class="a" style="left:391px;top:585px;width:110px;height:23px;background:#0078d7;box-shadow:inset 0 0 0 1px #a6d2f4"></div>
<div class="t" style="left:419px;top:586px;height:23px;line-height:23px;color:#e6f2ff"><i class="h">スプレ</i><i class="s">ッ</i><i class="h">ド</i></div>
<div class="pbox" style="left:160px;top:508px;width:240px;height:47px"></div>
<div class="pbox" style="left:378px;top:572px;width:132px;height:47px"></div>
<div class="circle" style="left:82px;top:302px">1</div>
<div class="circle" style="left:82px;top:501px">2</div>
<div class="circle" style="left:302px;top:568px">3</div>

</body></html>
